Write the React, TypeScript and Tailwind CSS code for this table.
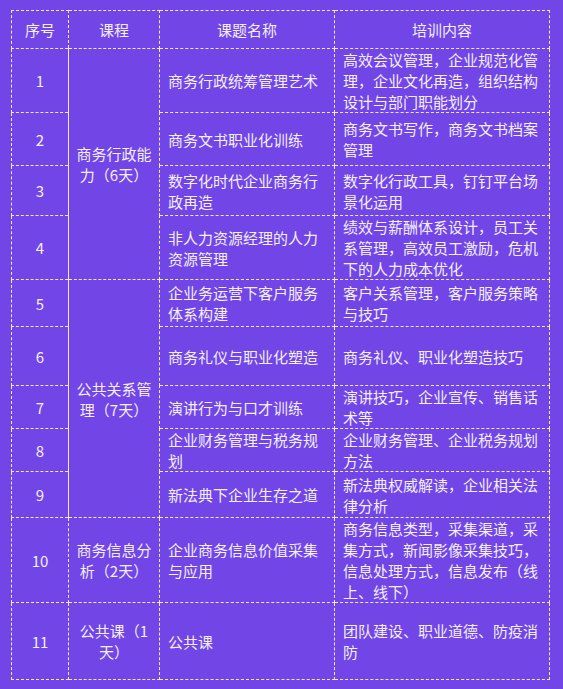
// Training course schedule table on a purple background

type Row = {
  no: number
  title: string
  content: string
  h: string
  course?: { text: string; span: number }
}

const rows: Row[] = [
  { no: 1, title: '商务行政统筹管理艺术', content: '高效会议管理，企业规范化管理，企业文化再造，组织结构设计与部门职能划分', h: 'h-[64px]', course: { text: '商务行政能力（6天）', span: 4 } },
  { no: 2, title: '商务文书职业化训练', content: '商务文书写作，商务文书档案管理', h: 'h-[53px]' },
  { no: 3, title: '数字化时代企业商务行政再造', content: '数字化行政工具，钉钉平台场景化运用', h: 'h-[50px]' },
  { no: 4, title: '非人力资源经理的人力资源管理', content: '绩效与薪酬体系设计，员工关系管理，高效员工激励，危机下的人力成本优化', h: 'h-[64px]' },
  { no: 5, title: '企业务运营下客户服务体系构建', content: '客户关系管理，客户服务策略与技巧', h: 'h-[47px]', course: { text: '公共关系管理（7天）', span: 5 } },
  { no: 6, title: '商务礼仪与职业化塑造', content: '商务礼仪、职业化塑造技巧', h: 'h-[59px]' },
  { no: 7, title: '演讲行为与口才训练', content: '演讲技巧，企业宣传、销售话术等', h: 'h-[43px]' },
  { no: 8, title: '企业财务管理与税务规划', content: '企业财务管理、企业税务规划方法', h: 'h-[43px]' },
  { no: 9, title: '新法典下企业生存之道', content: '新法典权威解读，企业相关法律分析', h: 'h-[46px]' },
  { no: 10, title: '企业商务信息价值采集与应用', content: '商务信息类型，采集渠道，采集方式，新闻影像采集技巧，信息处理方式，信息发布（线上、线下）', h: 'h-[85px]', course: { text: '商务信息分析（2天）', span: 1 } },
  { no: 11, title: '公共课', content: '团队建设、职业道德、防疫消防', h: 'h-[77px]', course: { text: '公共课（1天）', span: 1 } },
]

const cell = 'border border-dashed border-[#eeead4] px-2 py-0 align-middle'

export default function App() {
  return (
    <div
      className="min-h-[689px] w-full bg-[#7145e6] pl-[11px] pt-[10px] text-[15px] leading-[21px] text-[#f3efff]"
      style={{ fontFamily: '"Noto Sans CJK SC", "Noto Sans", sans-serif' }}
    >
      <table className="table-fixed border-collapse w-[538px]">
        <colgroup>
          <col className="w-[57px]" />
          <col className="w-[91px]" />
          <col className="w-[175px]" />
          <col className="w-[215px]" />
        </colgroup>
        <thead>
          <tr className="h-[38px]">
            <th className={`${cell} text-center font-normal`}>序号</th>
            <th className={`${cell} text-center font-normal`}>课程</th>
            <th className={`${cell} text-center font-normal`}>课题名称</th>
            <th className={`${cell} text-center font-normal`}>培训内容</th>
          </tr>
        </thead>
        <tbody>
          {rows.map((r) => (
            <tr key={r.no} className={r.h}>
              <td className={`${cell} text-center`}>{r.no}</td>
              {r.course && (
                <td
                  rowSpan={r.course.span}
                  className={`${cell} text-center px-[7px] ${r.course.span > 1 ? '[border-left-style:solid]' : ''}`}
                >
                  {r.course.text}
                </td>
              )}
              <td className={`${cell} text-left`}>{r.title}</td>
              <td className={`${cell} text-left`}>{r.content}</td>
            </tr>
          ))}
        </tbody>
      </table>
    </div>
  )
}
